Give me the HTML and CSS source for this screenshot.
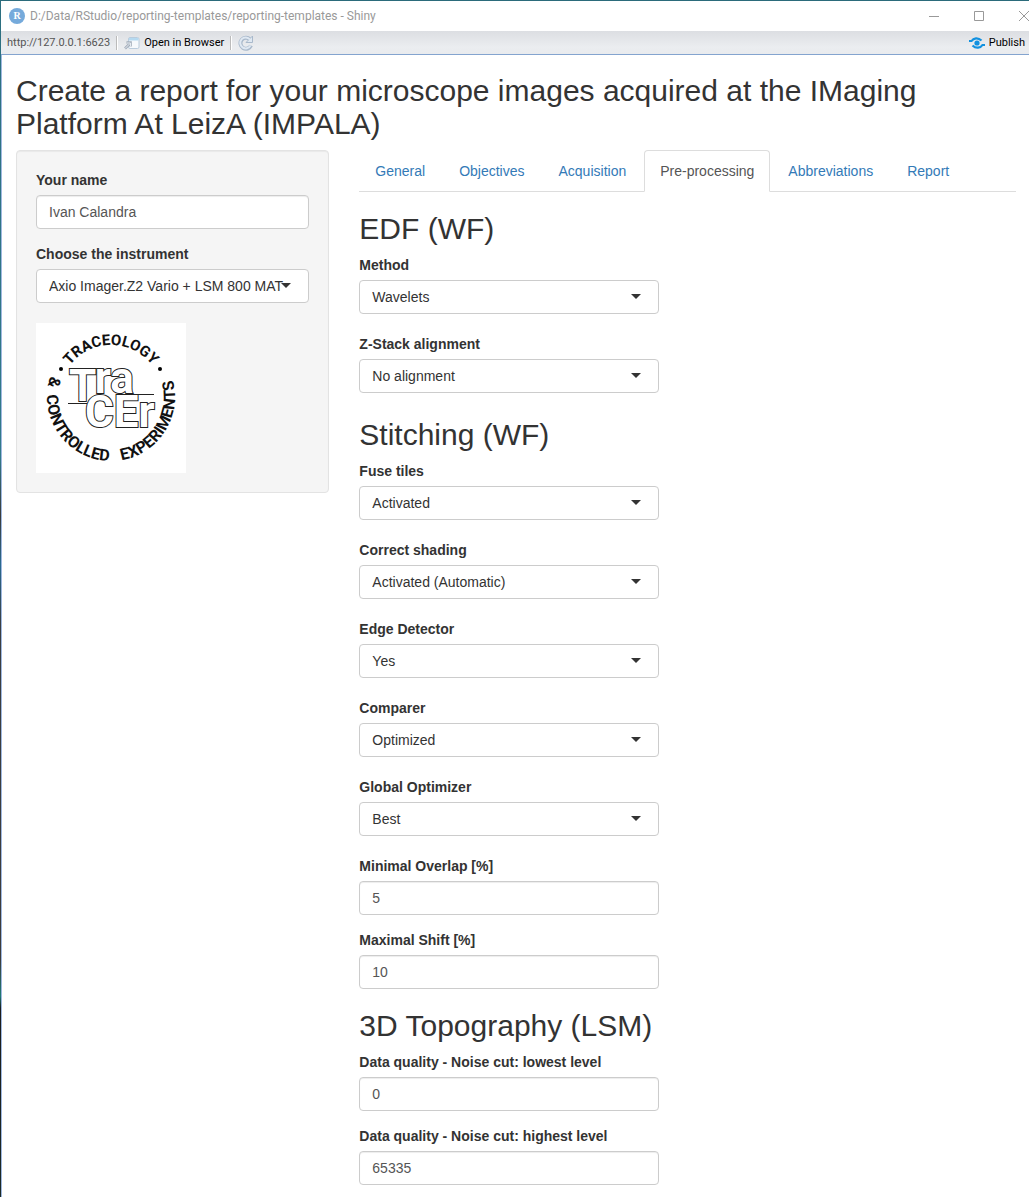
FILE: index.html
```html
<!DOCTYPE html>
<html lang="en">
<head>
<meta charset="utf-8">
<title>D:/Data/RStudio/reporting-templates/reporting-templates - Shiny</title>
<link rel="stylesheet" href="styles.css">
</head>
<body>
<div class="window">
  <header class="titlebar">
    <svg class="app-icon" width="16" height="16" viewBox="0 0 16 16" aria-hidden="true"><circle cx="8" cy="8" r="8" fill="#75aadb"/><text class="app-letter" x="8" y="11" text-anchor="middle">R</text></svg>
    <span class="title">D:/Data/RStudio/reporting-templates/reporting-templates - Shiny</span>
    <div class="window-buttons">
      <button type="button" aria-label="Minimize"><svg width="10" height="10" viewBox="0 0 10 10"><path d="M0 5.500H10"/></svg></button>
      <button type="button" aria-label="Maximize"><svg width="10" height="10" viewBox="0 0 10 10"><path d="M.5 .5H9.500V9.500H.5Z"/></svg></button>
      <button type="button" aria-label="Close"><svg width="10" height="10" viewBox="0 0 10 10"><path d="M0 0L10 10M10 0L0 10"/></svg></button>
    </div>
  </header>
  <div class="toolbar">
    <span class="address">http://127.0.0.1:6623</span>
    <span class="separator"></span>
    <button type="button" class="tool"><svg width="16" height="14" viewBox="0 0 16 14" aria-hidden="true"><rect x="4.500" y="1.500" width="10.500" height="11" rx="1.500" fill="#f6f9fc" stroke="#b9cbdc"/><path d="M5 2H14.500V4.500H5Z" fill="#b5d9f0"/><path d="M1 12.500L6 7.500M2.500 6.500H6.500V10.500" fill="none" stroke="#a3adba" stroke-width="2.600"/><path d="M1 12.500L6 7.500M3 7H6.500V10.500" fill="none" stroke="#e6ebf1"/></svg>Open in Browser</button>
    <span class="separator"></span>
    <button type="button" class="tool" aria-label="Reload"><svg width="16" height="16" viewBox="0 0 16 16" aria-hidden="true"><path d="M12 4.500A5.500 5.500 0 1 0 13 10.500" fill="none" stroke="#a9b9cb" stroke-width="4"/><path d="M14.500 1V7.500H8Z" fill="#dfe8f2" stroke="#a9b9cb"/><path d="M12 4.500A5.500 5.500 0 1 0 12.600 10.400" fill="none" stroke="#dfe8f2" stroke-width="2"/></svg></button>
    <button type="button" class="tool publish"><svg width="16" height="12" viewBox="0 0 16 12" aria-hidden="true"><circle cx="8" cy="6" r="2.600" fill="#1191e0"/><path d="M0 4H2.500C4.500 .8 9 .2 12.500 3.500M16 8H13.500C11.500 11.200 7 11.800 3.500 8.500" fill="none" stroke="#1191e0" stroke-width="2.200"/></svg>Publish</button>
  </div>
  <main class="page">
    <h2>Create a report for your microscope images acquired at the IMaging Platform At LeizA (IMPALA)</h2>
    <div class="row">
      <div class="col">
        <form class="well">
          <div class="group"><label for="name">Your name</label><input id="name" type="text" value="Ivan Calandra"></div>
          <div class="group"><label for="instrument">Choose the instrument</label><div class="select"><select id="instrument"><option>Axio Imager.Z2 Vario + LSM 800 MAT</option></select></div></div>
          <svg class="logo" width="150" height="150" viewBox="0 0 150 150" role="img" aria-label="TraCEr, Traceology and Controlled Experiments">
            <defs>
              <path id="upper" d="M75 126A52 52 0 0 1 75 22A52 52 0 0 1 75 126"/>
              <path id="lower" d="M75 10A64 64 0 0 0 75 138A64 64 0 0 0 75 10"/>
            </defs>
            <rect width="150" height="150" fill="#fff"/>
            <g class="ring" text-anchor="middle">
              <text class="ring-top"><textPath href="#upper" startOffset="50%">TRACEOLOGY</textPath></text>
              <text><textPath href="#lower" startOffset="21%">&amp;</textPath></text>
              <text><textPath href="#lower" startOffset="37%">CONTROLLED</textPath></text>
              <text><textPath href="#lower" startOffset="66%">EXPERIMENTS</textPath></text>
            </g>
            <circle cx="25" cy="46" r="2"/><circle cx="124" cy="46" r="2"/>
            <path d="M32 80.500H52M101 71.500H118" stroke="#222"/>
            <g class="mark">
              <text x="33" y="78">T<tspan dy="-8">ra</tspan></text>
              <text x="49" y="104">CEr</text>
            </g>
          </svg>
        </form>
      </div>
      <div class="col">
        <nav class="tabs">
          <a href="#general">General</a><a href="#objectives">Objectives</a><a href="#acquisition">Acquisition</a><a class="active" href="#preprocessing" aria-current="page">Pre-processing</a><a href="#abbreviations">Abbreviations</a><a href="#report">Report</a>
        </nav>
        <form class="fields" id="preprocessing">
          <h2>EDF (WF)</h2>
          <div class="group"><label for="method">Method</label><div class="select"><select id="method"><option>Wavelets</option></select></div></div>
          <div class="group"><label for="zstack">Z-Stack alignment</label><div class="select"><select id="zstack"><option>No alignment</option></select></div></div>
          <h2>Stitching (WF)</h2>
          <div class="group"><label for="fuse">Fuse tiles</label><div class="select"><select id="fuse"><option>Activated</option></select></div></div>
          <div class="group"><label for="shading">Correct shading</label><div class="select"><select id="shading"><option>Activated (Automatic)</option></select></div></div>
          <div class="group"><label for="edge">Edge Detector</label><div class="select"><select id="edge"><option>Yes</option></select></div></div>
          <div class="group"><label for="comparer">Comparer</label><div class="select"><select id="comparer"><option>Optimized</option></select></div></div>
          <div class="group"><label for="optimizer">Global Optimizer</label><div class="select"><select id="optimizer"><option>Best</option></select></div></div>
          <div class="group"><label for="overlap">Minimal Overlap [%]</label><input id="overlap" type="number" value="5"></div>
          <div class="group"><label for="shift">Maximal Shift [%]</label><input id="shift" type="number" value="10"></div>
          <h2>3D Topography (LSM)</h2>
          <div class="group"><label for="lowest">Data quality - Noise cut: lowest level</label><input id="lowest" type="number" value="0"></div>
          <div class="group"><label for="highest">Data quality - Noise cut: highest level</label><input id="highest" type="number" value="65335"></div>
        </form>
      </div>
    </div>
  </main>
</div>
</body>
</html>
```
FILE: styles.css
```css
* { box-sizing: border-box; }
body {
  margin: 0;
  font: 14px/20px "Liberation Sans", Arial, sans-serif;
  color: #333;
  background: #fff;
}
.window {
  border-top: 1px solid #2b6b7b;
  padding-left: 1px;
  background: linear-gradient(#2c6f80 0%, #337a8a 38%, #3a3a3a 43%, #2a6a90 47%, #3a3e42 52%, #3c3c3c 80%, #1f7a74 83%, #1c1c1c 84%, #1d2b28 100%) 0 0 / 1px 100% no-repeat;
  min-height: 100vh;
  overflow: hidden;
}
button { border: 0; padding: 0; background: none; font: inherit; color: inherit; }
svg { flex: none; }

.titlebar {
  display: flex;
  align-items: center;
  height: 30px;
  padding-left: 8px;
  gap: 5px;
  overflow: hidden;
  background: #fff;
  color: #999;
  font: 12px/16px Roboto, "Noto Sans", sans-serif;
}
.app-letter { font: bold 10px "Liberation Serif", serif; fill: #fff; }
.title { white-space: nowrap; }
.window-buttons { display: flex; flex: none; gap: 35px; margin-left: auto; }
.window-buttons svg { display: block; fill: none; stroke: #999; }

.toolbar {
  display: flex;
  align-items: center;
  height: 24px;
  padding: 1px 4px 0 6px;
  border-bottom: 1px solid #84a4cf;
  background: linear-gradient(#dcdee2, #ebedf0 70%, #e9ebee);
  color: #000;
  font: 11px/16px Roboto, "Noto Sans", sans-serif;
  white-space: nowrap;
}
.address { color: #555; }
.separator { width: 2px; height: 14px; margin: 0 6px; border-left: 1px solid #bbb; border-right: 1px solid #fff; }
.tool { display: flex; align-items: center; gap: 4px; }
.publish { margin-left: auto; }

.page {
  border-left: 1px solid #9fb8e0;
  padding: 0 13px 0 14px;
  overflow: hidden;
}
h2 { margin: 20px 0 10px; font-size: 30px; line-height: 33px; font-weight: 400; }
.page > h2 { margin-top: 19px; }
.row { display: grid; grid-template-columns: 1fr 2fr; margin: 0 -15px; }
.col { padding: 0 15px; min-width: 0; }
.well {
  padding: 19px;
  border: 1px solid #e3e3e3;
  border-radius: 4px;
  background: #f5f5f5;
  box-shadow: inset 0 1px 1px rgba(0, 0, 0, .05);
}
.group { margin-bottom: 15px; }
label { display: block; margin-bottom: 5px; font-weight: 700; }
input, select {
  display: block;
  width: 100%;
  height: 34px;
  margin: 0;
  padding: 0 12px;
  border: 1px solid #ccc;
  border-radius: 4px;
  background: #fff;
  color: #555;
  font: inherit;
  appearance: none;
}
input { box-shadow: inset 0 1px 1px rgba(0, 0, 0, .075); }
input[type="number"]::-webkit-inner-spin-button { appearance: none; }
select { color: #333; }
.select { position: relative; padding-bottom: 5px; }
.select::after {
  content: "";
  position: absolute;
  top: 14px;
  right: 18px;
  border: 5px solid transparent;
  border-top-color: #333;
  border-bottom-width: 0;
  pointer-events: none;
}
.logo { display: block; }
.ring { font: bold 16px Roboto, sans-serif; fill: #111; }
.ring-top { font-size: 15px; }
.mark {
  font: bold 44px Roboto, sans-serif;
  fill: #fff;
  stroke: #222;
  stroke-width: 2px;
  paint-order: stroke;
}

.tabs { display: flex; border-bottom: 1px solid #ddd; }
.tabs a {
  margin: 0 2px -1px 0;
  padding: 10px 15px;
  border: 1px solid transparent;
  border-radius: 4px 4px 0 0;
  color: #337ab7;
  text-decoration: none;
}
.tabs .active { border-color: #ddd #ddd #fff; background: #fff; color: #555; }
.fields { max-width: 300px; }
.fields h2 { white-space: nowrap; }
```
